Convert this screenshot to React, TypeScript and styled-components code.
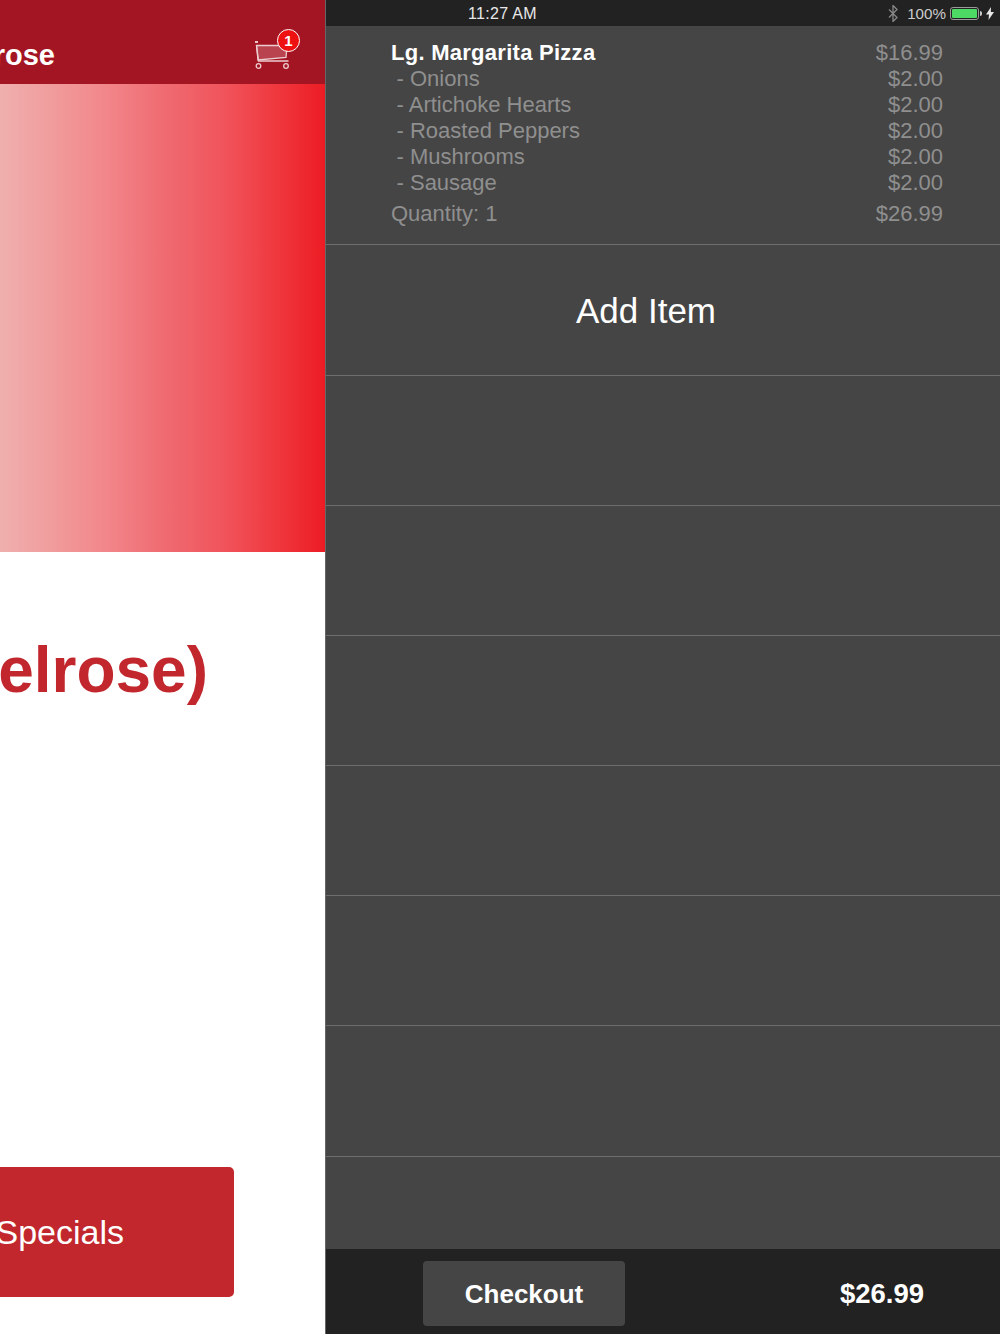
import * as React from "react";
import styled, { createGlobalStyle } from "styled-components";

const GlobalStyle = createGlobalStyle`
  html, body {
    margin: 0;
    padding: 0;
    background: #fff;
    font-family: "Liberation Sans", Arial, sans-serif;
  }
`;

const Screen = styled.div`
  width: 1000px;
  height: 1334px;
  display: flex;
  overflow: hidden;
`;

/* left side: the restaurant page, pushed off screen by the cart drawer */
const Page = styled.div`
  width: 325px;
  flex: none;
  display: flex;
  flex-direction: column;
  background: #fff;
  overflow: hidden;
`;

const Header = styled.div`
  height: 84px;
  flex: none;
  background: #a31522;
  display: flex;
  align-items: flex-start;
  justify-content: flex-end;
  padding-right: 25px;
`;

const HeaderTitle = styled.div`
  flex: 1;
  min-width: 0;
  display: flex;
  justify-content: flex-end;
  margin-right: 199px;
  padding-top: 38px;
  font-size: 29px;
  line-height: 35px;
  font-weight: bold;
  color: #fff;
  white-space: nowrap;
`;

const CartWrap = styled.div`
  position: relative;
  width: 46px;
  height: 72px;
  flex: none;
`;

const CartBadge = styled.div`
  position: absolute;
  left: 23px;
  top: 29px;
  width: 21px;
  height: 21px;
  border-radius: 50%;
  border: 1.5px solid #fff;
  background: #ee1111;
  color: #fff;
  font-size: 15px;
  font-weight: bold;
  line-height: 21px;
  text-align: center;
`;

const Banner = styled.div`
  height: 468px;
  flex: none;
  background: linear-gradient(
    to right,
    #efb0ae 0%,
    #f28a8d 30%,
    #ef6c72 50%,
    #f1525a 70%,
    #ef383e 85%,
    #ed1c24 100%
  );
`;

const Body = styled.div`
  flex: 1;
  display: flex;
  flex-direction: column;
  align-items: flex-end;
`;

const BigTitle = styled.div`
  margin-top: 79px;
  margin-right: 117px;
  font-size: 64px;
  line-height: 78px;
  font-weight: bold;
  color: #c1272d;
  white-space: nowrap;
`;

const SpecialsButton = styled.div`
  margin-top: 458px;
  margin-right: 91px;
  width: 330px;
  height: 130px;
  flex: none;
  background: #c1272d;
  border-radius: 0 5px 5px 0;
  color: #fff;
  font-size: 34px;
  line-height: 130px;
  text-align: right;
  padding-right: 110px;
  box-sizing: border-box;
  white-space: nowrap;
`;

/* right side: the cart */
const Drawer = styled.div`
  flex: 1;
  display: flex;
  flex-direction: column;
  background: #454545;
  border-left: 1px solid #666;
`;

const StatusBar = styled.div`
  position: relative;
  height: 26px;
  flex: none;
  background: #222;
  display: flex;
  align-items: center;
  justify-content: flex-end;
  padding-right: 6px;
  gap: 3px;
  color: #ccc;
  font-size: 15.2px;
`;

const StatusTime = styled.span`
  position: absolute;
  left: 142px;
  top: 5px;
  font-size: 16px;
  letter-spacing: 0.3px;
  line-height: 17px;
  color: #e8e8e8;
`;

const BluetoothMark = styled.svg`
  width: 12px;
  height: 17px;
  margin-right: 5px;
`;

const Battery = styled.div`
  position: relative;
  width: 29px;
  height: 13px;
  border: 1px solid #999;
  border-radius: 3px;
  padding: 1px;
  box-sizing: border-box;
  margin-left: 1px;
  margin-right: 4px;
  &::after {
    content: "";
    position: absolute;
    right: -4px;
    top: 3px;
    width: 2px;
    height: 5px;
    background: #ccc;
    border-radius: 0 2px 2px 0;
  }
`;

const BatteryFill = styled.div`
  height: 100%;
  background: #4cd964;
  border-radius: 1px;
`;

const BoltMark = styled.svg`
  width: 8px;
  height: 13px;
`;

const Rows = styled.div`
  flex: 1;
  min-height: 0;
  overflow: hidden;
`;

const OrderRow = styled.div`
  height: 219px;
  box-sizing: border-box;
  border-bottom: 1px solid #6e6e6e;
  margin-bottom: 1px;
  padding: 14px 57px 0 65px;
`;

const OrderLine = styled.div<{ $head?: boolean; $gap?: boolean; $sub?: boolean }>`
  display: flex;
  justify-content: space-between;
  height: 26px;
  font-size: 22px;
  line-height: 26px;
  color: #8f8f8f;
  margin-top: ${(p) => (p.$gap ? "5px" : "0")};
  & > span:first-child {
    color: ${(p) => (p.$head ? "#fff" : "#8f8f8f")};
    font-weight: ${(p) => (p.$head ? "bold" : "normal")};
    letter-spacing: ${(p) => (p.$head ? "0.27px" : "0")};
    padding-left: ${(p) => (p.$sub ? "5.5px" : "0")};
  }
`;

const EmptyRow = styled.div`
  height: 130.09px;
  box-sizing: border-box;
  border-bottom: 1px solid #6e6e6e;
  display: flex;
  align-items: center;
  justify-content: center;
  color: #fff;
  font-size: 35px;
  padding-right: 34px;
`;

const Footer = styled.div`
  height: 85px;
  flex: none;
  box-sizing: border-box;
  background: #222;
  display: flex;
  align-items: flex-start;
  padding: 12px 76px 0 97px;
  justify-content: space-between;
`;

const CheckoutButton = styled.div`
  width: 202px;
  height: 65px;
  background: #454545;
  border-radius: 4px;
  color: #fff;
  font-size: 26px;
  font-weight: bold;
  line-height: 66px;
  text-align: center;
`;

const FooterTotal = styled.div`
  color: #fff;
  font-size: 27.5px;
  font-weight: bold;
  line-height: 66px;
`;

const toppings = ["Onions", "Artichoke Hearts", "Roasted Peppers", "Mushrooms", "Sausage"];

const Cart = () => (
  <svg width="46" height="72" viewBox="0 0 46 72" fill="none">
    <path d="M1 42h3" stroke="#e9c4c8" strokeWidth="2" />
    <path d="M2.5 45.5H33l-1 12-28 2.5z" fill="#b9444f" stroke="#eccdd0" strokeWidth="1.3" />
    <path d="M2.5 45.5l2 15.5H34.5" stroke="#eccdd0" strokeWidth="1.3" />
    <circle cx="4.5" cy="66" r="2.3" stroke="#eccdd0" strokeWidth="1.3" />
    <circle cx="32" cy="66" r="2.3" stroke="#eccdd0" strokeWidth="1.3" />
  </svg>
);

export default function App() {
  return (
    <Screen>
      <GlobalStyle />
      <Page>
        <Header>
          <HeaderTitle>Melrose</HeaderTitle>
          <CartWrap>
            <Cart />
            <CartBadge>1</CartBadge>
          </CartWrap>
        </Header>
        <Banner />
        <Body>
          <BigTitle>(Melrose)</BigTitle>
          <SpecialsButton>View Specials</SpecialsButton>
        </Body>
      </Page>
      <Drawer>
        <StatusBar>
          <StatusTime>11:27 AM</StatusTime>
          <BluetoothMark viewBox="0 0 12 17" fill="none">
            <path d="M2 4.5l8 8-4 4V.5l4 4-8 8" stroke="#888" strokeWidth="1.3" />
          </BluetoothMark>
          <span>100%</span>
          <Battery>
            <BatteryFill />
          </Battery>
          <BoltMark viewBox="0 0 8 13">
            <path d="M5 0L0 7.5h3L2.5 13 8 5H4.8z" fill="#e8e8e8" />
          </BoltMark>
        </StatusBar>
        <Rows>
          <OrderRow>
            <OrderLine $head>
              <span>Lg. Margarita Pizza</span>
              <span>$16.99</span>
            </OrderLine>
            {toppings.map((t) => (
              <OrderLine key={t} $sub>
                <span>- {t}</span>
                <span>$2.00</span>
              </OrderLine>
            ))}
            <OrderLine $gap>
              <span>Quantity: 1</span>
              <span>$26.99</span>
            </OrderLine>
          </OrderRow>
          <EmptyRow>Add Item</EmptyRow>
          <EmptyRow />
          <EmptyRow />
          <EmptyRow />
          <EmptyRow />
          <EmptyRow />
          <EmptyRow />
        </Rows>
        <Footer>
          <CheckoutButton>Checkout</CheckoutButton>
          <FooterTotal>$26.99</FooterTotal>
        </Footer>
      </Drawer>
    </Screen>
  );
}
